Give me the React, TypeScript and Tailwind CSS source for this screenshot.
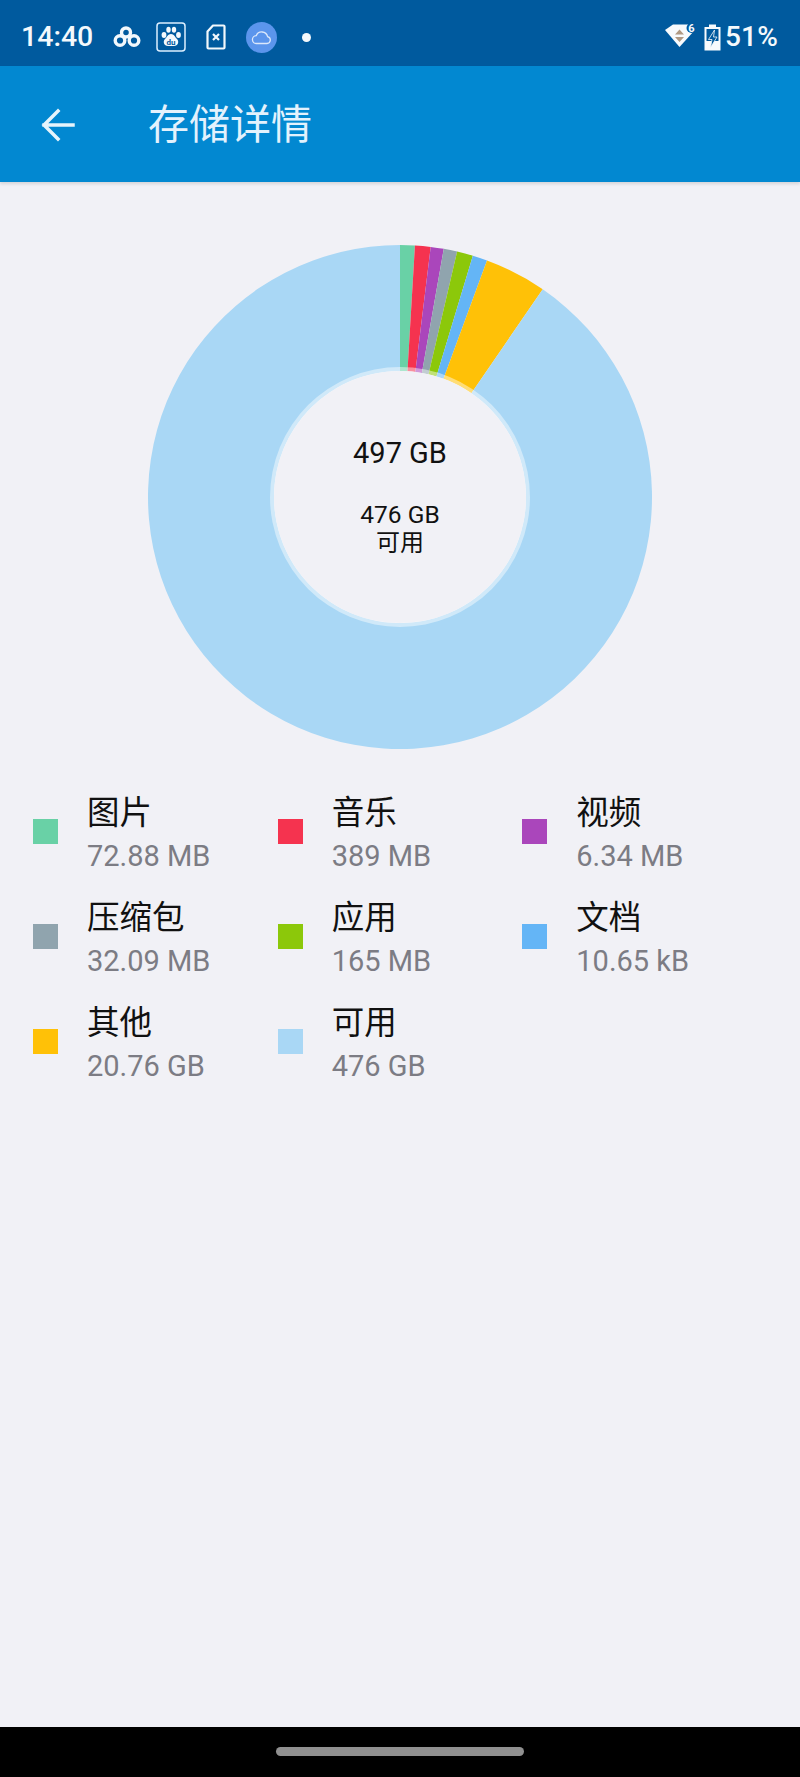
const FONT = "font-['Roboto','Noto_Sans_CJK_SC',sans-serif]";

const SLICES = [
  { color: "#69d1a6", end: 3.4 },
  { color: "#f5334f", end: 7 },
  { color: "#aa46bb", end: 10 },
  { color: "#90a4ae", end: 13.1 },
  { color: "#8cc80a", end: 16.8 },
  { color: "#64b5f6", end: 20.2 },
  { color: "#ffc107", end: 34.5 },
  { color: "#a9d7f5", end: 360 },
];

const LEGEND = [
  { label: "图片", value: "72.88 MB", color: "#69d1a6" },
  { label: "音乐", value: "389 MB", color: "#f5334f" },
  { label: "视频", value: "6.34 MB", color: "#aa46bb" },
  { label: "压缩包", value: "32.09 MB", color: "#90a4ae" },
  { label: "应用", value: "165 MB", color: "#8cc80a" },
  { label: "文档", value: "10.65 kB", color: "#64b5f6" },
  { label: "其他", value: "20.76 GB", color: "#ffc107" },
  { label: "可用", value: "476 GB", color: "#a9d7f5" },
];

function slicePath(start: number, end: number) {
  const point = (deg: number, r: number) => {
    const a = (deg * Math.PI) / 180;
    return `${252 + r * Math.sin(a)} ${252 - r * Math.cos(a)}`;
  };
  const large = end - start > 180 ? 1 : 0;
  return `M${point(start, 252)} A252 252 0 ${large} 1 ${point(end, 252)} L${point(end, 126)} A126 126 0 ${large} 0 ${point(start, 126)} Z`;
}

function Donut() {
  return (
    <div className="relative h-[504px] w-[504px]">
      <svg width="504" height="504" viewBox="0 0 504 504" className="block">
        {SLICES.map((s, i) => (
          <path key={s.color} d={slicePath(i === 0 ? 0 : SLICES[i - 1].end, s.end)} fill={s.color} />
        ))}
        <circle cx="252" cy="252" r="130" fill="#ffffff" fillOpacity="0.45" />
        <circle cx="252" cy="252" r="126" fill="#f1f1f6" />
      </svg>
      <div className="absolute inset-0 flex flex-col items-center pt-[190px] text-[#111]">
        <div className="text-[29px] leading-[36px]">497 GB</div>
        <div className="mt-[29px] text-[24.500px] leading-[29px]">476 GB</div>
        <div className="text-[24px] leading-[29px]">可用</div>
      </div>
    </div>
  );
}

function StatusIcons() {
  return (
    <div className="ml-[20px] flex items-center">
      {/* linked loops */}
      <svg width="28" height="22" viewBox="0 0 28 22" fill="none" stroke="#f2f8fc" strokeWidth="3.400">
        <circle cx="13" cy="6.5" r="4.5" />
        <circle cx="7" cy="14.500" r="4.800" />
        <circle cx="21" cy="14.500" r="4.800" />
      </svg>
      {/* paw */}
      <svg width="30" height="30" viewBox="0 0 30 30" className="ml-[15px]">
        <rect x="1" y="1" width="28" height="28" rx="3" fill="none" stroke="#dcefff" strokeWidth="1.5" />
        <ellipse cx="8" cy="13" rx="2.4" ry="3" fill="#f4f9fc" />
        <ellipse cx="12.5" cy="7.8" rx="2.2" ry="3" fill="#f4f9fc" />
        <ellipse cx="18" cy="7.8" rx="2.2" ry="3" fill="#f4f9fc" />
        <ellipse cx="22.5" cy="13" rx="2.4" ry="3" fill="#f4f9fc" />
        <path d="M15 12c3 0 4 3 6 5 2.500 2.500 1 7-3 7h-6c-4 0-5.500-4.500-3-7 2-2 3-5 6-5z" fill="#f4f9fc" />
        <text x="15" y="23" textAnchor="middle" fontSize="8" fontWeight="700" fill="#005a9e" fontFamily="Roboto, sans-serif">du</text>
      </svg>
      {/* sim error */}
      <svg width="20" height="26" viewBox="0 0 20 26" fill="none" className="ml-[20px]">
        <path d="M7 1.500h10.500a1 1 0 0 1 1 1v21a1 1 0 0 1-1 1h-15a1 1 0 0 1-1-1V7.500z" stroke="#f2f8fc" strokeWidth="2.200" strokeLinejoin="round" />
        <path d="M7 10l6 6M13 10l-6 6" stroke="#f2f8fc" strokeWidth="2.200" />
      </svg>
      {/* cloud badge */}
      <div className="ml-[20px] flex h-[31px] w-[31px] items-center justify-center rounded-full bg-[#5b95ec]">
        <svg width="21" height="15" viewBox="0 0 21 15" fill="none" stroke="#dbe8fb" strokeWidth="1.300">
          <path d="M5.500 13.500h10.500a3.500 3.500 0 0 0 .6-6.900 6 6 0 0 0-11.400-.9 3.900 3.900 0 0 0 .3 7.800z" />
        </svg>
      </div>
      <div className="ml-[25px] h-[9px] w-[9px] rounded-full bg-[#f4f9fc]" />
    </div>
  );
}

function StatusRight() {
  return (
    <div className="flex items-center">
      <svg width="32" height="28" viewBox="0 0 32 28" className="mt-[-2px]">
        <path d="M1 8 L9 2.500 H24 L30 9 L15.500 25 Z" fill="#f8fbfd" />
        <path d="M15.500 7.500l4.500 5h-9zM15.500 20l-4.500-5h9z" fill="#b09a84" />
        <circle cx="27.500" cy="6" r="5" fill="#005a9e" />
        <text x="27.500" y="10" textAnchor="middle" fontSize="11" fontWeight="700" fill="#f8fbfd" fontFamily="Roboto, sans-serif">6</text>
      </svg>
      <svg width="17" height="27" viewBox="0 0 17 27" className="ml-[8px]">
        <path d="M5 0.500h7v2.500h4.500v23.500h-16v-23.500h4.500z" fill="#f8fbfd" />
        <rect x="2.500" y="5" width="12" height="12" fill="#005a9e" />
        <path d="M10.500 6L4.500 15.500h3.500l-1.500 8 6.500-10.500h-3.500z" fill="#005a9e" stroke="#f8fbfd" strokeWidth="0.800" />
      </svg>
      <span className="ml-[4px] text-[28px] font-medium leading-none tracking-[0.2px] text-[#f4f9fc]">51%</span>
    </div>
  );
}

export default function App() {
  return (
    <div className={`flex h-[1777px] w-[800px] flex-col overflow-hidden bg-[#f1f1f6] ${FONT}`}>
      <div className="flex h-[66px] shrink-0 items-center justify-between bg-[#005a9e] pl-[21px] pr-[22px] pt-[8px]">
        <div className="flex items-center">
          <span className="text-[28.500px] font-medium leading-none text-[#f4f9fc]">14:40</span>
          <StatusIcons />
        </div>
        <StatusRight />
      </div>

      <div className="z-10 flex h-[116px] shrink-0 items-center bg-[#0288d1] pl-[41px] pt-[2px] shadow-[0_2px_3px_rgba(0,0,0,0.12)]">
        <svg width="34" height="34" viewBox="0 0 34 34" fill="none" stroke="#e6f4fc" strokeWidth="3.500" strokeLinecap="square">
          <path d="M32 17H3M17 3L3 17l14 14" />
        </svg>
        <h1 className="ml-[73px] text-[41px] font-normal leading-none text-[#e3f2fd]">存储详情</h1>
      </div>

      <div className="flex flex-1 flex-col">
        <div className="flex justify-center pt-[63px]">
          <Donut />
        </div>
        <div className="mt-[30px] grid grid-cols-[repeat(3,244.67px)] pl-[33px]">
          {LEGEND.map((item) => (
            <div key={item.label} className="flex h-[105px] items-center">
              <div className="h-[25px] w-[25px] shrink-0" style={{ backgroundColor: item.color }} />
              <div className="ml-[29px] pt-[6px]">
                <div className="text-[32.500px] leading-[42px] text-[#111]">{item.label}</div>
                <div className="text-[29px] leading-[44px] text-[#7c7c84]">{item.value}</div>
              </div>
            </div>
          ))}
        </div>
      </div>

      <div className="flex h-[50px] shrink-0 justify-center bg-black pt-[20px]">
        <div className="h-[9px] w-[248px] rounded-full bg-[#909090]" />
      </div>
    </div>
  );
}
